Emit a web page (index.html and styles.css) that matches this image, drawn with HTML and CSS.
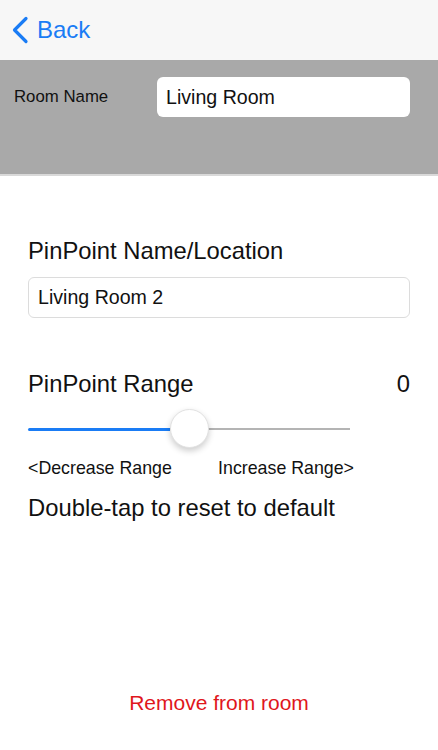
FILE: index.html
```html
<!DOCTYPE html>
<html lang="en">
<head>
    <meta charset="UTF-8">
    <meta name="viewport" content="width=device-width, initial-scale=1.0">
    <title>PinPoint</title>
    <link rel="stylesheet" href="styles.css">
</head>
<body>
    <!-- Navigation bar -->
    <header class="nav-bar">
        <a class="back-link" href="#">
            <svg class="back-icon" width="18" height="28" viewBox="0 0 18 28">
                <path d="M15 2.5 L3.5 14 L15 25.5" fill="none" stroke="#1a7cf5" stroke-width="3.2" stroke-linecap="round" stroke-linejoin="round"/>
            </svg>
            <span>Back</span>
        </a>
    </header>

    <!-- Room header -->
    <section class="room-band">
        <label class="room-label" for="room-name">Room Name</label>
        <input class="room-input" id="room-name" type="text" value="Living Room">
    </section>

    <main class="content">
        <h2 class="field-title">PinPoint Name/Location</h2>
        <input class="name-input" type="text" value="Living Room 2">

        <div class="range-head">
            <h2 class="field-title">PinPoint Range</h2>
            <span class="range-value">0</span>
        </div>

        <div class="slider">
            <div class="track-fill"></div>
            <div class="track-rest"></div>
            <div class="thumb"></div>
        </div>

        <div class="range-labels">
            <span>&lt;Decrease Range</span>
            <span>Increase Range&gt;</span>
        </div>

        <p class="hint">Double-tap to reset to default</p>
    </main>

    <footer class="footer">
        <a class="remove-link" href="#">Remove from room</a>
    </footer>
</body>
</html>
```

FILE: styles.css
```css
* {
    box-sizing: border-box;
}
html, body {
    height: 100%;
}
body {
    margin: 0;
    font-family: "Liberation Sans", Arial, sans-serif;
    color: #111;
    background: #fff;
    display: flex;
    flex-direction: column;
}
.nav-bar {
    height: 60px;
    background-color: #f7f7f7;
    display: flex;
    align-items: center;
    padding-left: 11px;
}
.back-link {
    display: flex;
    align-items: center;
    gap: 8px;
    color: #1a7cf5;
    text-decoration: none;
    font-size: 24px;
}
.back-icon {
    display: block;
}
.room-band {
    height: 116px;
    background-color: #a9a9a9;
    border-bottom: 2px solid #d9d9d9;
    display: flex;
    align-items: flex-start;
    padding: 17px 28px 0 14px;
}
.room-label {
    flex: 0 0 143px;
    font-size: 16.8px;
    line-height: 40px;
    color: #111;
}
.room-input {
    flex: 1;
    min-width: 0;
    height: 40px;
    border: none;
    border-radius: 6px;
    background: #fff;
    padding: 0 9px;
    font-family: inherit;
    font-size: 19.6px;
    color: #111;
}
.content {
    padding: 61px 28px 0;
}
.field-title {
    margin: 0;
    font-size: 23.8px;
    font-weight: normal;
    line-height: 28px;
}
.name-input {
    display: block;
    width: 100%;
    height: 41px;
    margin-top: 12px;
    border: 1px solid #dcdcdc;
    border-radius: 6px;
    padding: 0 9px;
    font-family: inherit;
    font-size: 19.6px;
    color: #111;
}
.range-head {
    display: flex;
    justify-content: space-between;
    align-items: center;
    margin-top: 52px;
}
.range-value {
    font-size: 23.8px;
    line-height: 28px;
}
.slider {
    position: relative;
    width: 322px;
    height: 40px;
    margin-top: 11px;
    display: flex;
    align-items: center;
}
.track-fill {
    width: 142px;
    height: 3px;
    background-color: #1a7cf5;
    border-radius: 2px 0 0 2px;
}
.track-rest {
    flex: 1;
    height: 2px;
    background-color: #b4b4b4;
}
.thumb {
    position: absolute;
    left: 142px;
    top: 0;
    width: 39px;
    height: 39px;
    border-radius: 50%;
    background: #fff;
    border: 1px solid #e2e2e2;
    box-shadow: 0 3px 6px rgba(0, 0, 0, 0.2);
}
.range-labels {
    width: 326px;
    display: flex;
    justify-content: space-between;
    margin-top: 9px;
    font-size: 17.8px;
    line-height: 20px;
}
.hint {
    margin: 16px 0 0;
    font-size: 23.8px;
    line-height: 28px;
}
.footer {
    margin-top: auto;
    padding-bottom: 35px;
    text-align: center;
}
.remove-link {
    color: #e0161c;
    text-decoration: none;
    font-size: 21px;
}
```
